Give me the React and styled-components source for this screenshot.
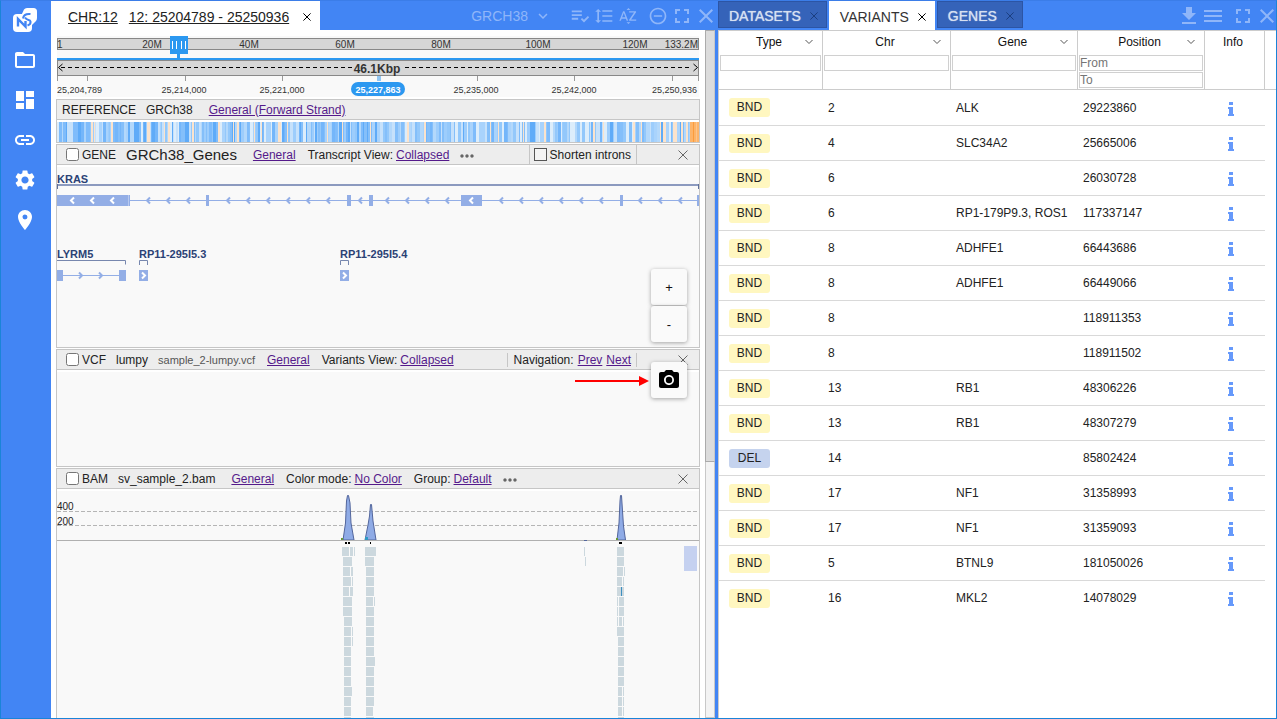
import React from 'react';
import styled, { createGlobalStyle, css } from 'styled-components';
import {
  MdFolderOpen, MdDashboard, MdInsertLink, MdSettings, MdPlace, MdPlaylistAddCheck,
  MdFormatLineSpacing, MdSortByAlpha, MdRemoveCircleOutline, MdFullscreen, MdClose,
  MdKeyboardArrowDown, MdDownload, MdMenu, MdMoreHoriz, MdPhotoCamera,
} from 'react-icons/md';

const GlobalStyle = createGlobalStyle`
  *, *::before, *::after { box-sizing: border-box; }
  body {
    margin: 0;
    background: #4285f4;
    color: #222;
    font-family: "Liberation Sans", Arial, sans-serif;
    font-size: 12px;
  }
  button, input { font: inherit; color: inherit; }
  button { border: 0; padding: 0; background: none; cursor: pointer; }
`;

const Frame = styled.div`
  display: grid;
  grid-template-columns: 50px minmax(0, 667fr) minmax(0, 558fr);
  min-height: 100vh;
  background: #4285f4;
  border: 1px solid #1a84d8;
  border-top-color: #3b7de8;
`;

const Sidebar = styled.nav`
  display: flex;
  flex-direction: column;
  align-items: center;
  gap: 18px;
  padding-top: 6px;
  color: #fff;
`;

const SideButton = styled.button`
  display: flex;
  align-items: center;
  justify-content: center;
  width: 26px;
  height: 22px;
  margin-right: 2px;
  svg { flex: none; }
`;

const Logo = styled.svg`
  width: 26px;
  height: 26px;
  margin: 0 2px -2px 0;
`;

const Panel = styled.section`
  display: flex;
  flex-direction: column;
  min-width: 0;
`;

const BrowserPanel = styled(Panel)`
  padding-right: 3px;
`;

const PanelHeader = styled.header`
  display: flex;
  align-items: flex-start;
  flex: none;
  height: 29px;
  gap: 2px;
`;

const Tab = styled.div`
  display: flex;
  align-items: center;
  gap: 9px;
  height: ${p => (p.$active ? 29 : 27)}px;
  padding: 2px 8px 0 10px;
  font-size: 14px;
  border: 1px solid ${p => (p.$active ? '#fff' : '#2c55a5')};
  background: ${p => (p.$active ? '#fff' : '#3563b9')};
  color: ${p => (p.$active ? '#333' : '#d7e0f1')};
  text-shadow: ${p => (p.$active ? 'none' : '0 0 1px #d7e0f1')};
  button { display: flex; color: ${p => (p.$active ? '#000' : '#1c3f80')}; }
`;

const LocationTab = styled(Tab)`
  gap: 11px;
  padding: 2px 8px 0 16px;
  a { color: #222; }
  button { padding-left: 3px; }
`;

const Toolbar = styled.div`
  display: flex;
  align-items: center;
  gap: 6px;
  height: 29px;
  margin-left: auto;
  color: #8fb6f9;
`;

const ToolGroup = styled.div`
  display: flex;
  gap: 6px;
  margin-right: 6px;
`;

const ToolButton = styled.button`
  display: flex;
  justify-content: center;
  align-items: center;
  width: 18px;
  height: 24px;
  svg { flex: none; }
`;

const GenomeButton = styled.button`
  display: flex;
  align-items: center;
  gap: 6px;
  margin-right: 13px;
  font-size: 14px;
`;

const BrowserBody = styled.div`
  position: relative;
  display: flex;
  flex: 1;
  background: #fff;
`;

const Tracks = styled.div`
  display: flex;
  flex-direction: column;
  flex: 1;
  gap: 1px;
  min-width: 0;
  padding: 6px 5px 0;
`;

const Chart = styled.svg`
  display: block;
  width: 100%;
  height: auto;
  background: #f9f9f9;
  font-family: "Liberation Sans", Arial, sans-serif;
`;

const RulerBox = styled.div`
  margin: 0 1px 1px;
`;

const Track = styled.section`
  display: flex;
  flex-direction: column;
  border: 1px solid #c6c6c6;
  background: #f9f9f9;
  ${p => p.$grow && css`flex: 1; border-bottom: 0;`}
`;

const TrackHeader = styled.div`
  display: flex;
  align-items: center;
  flex: none;
  height: 20px;
  padding: 0 11px 0 ${p => (p.$flush ? 5 : 9)}px;
  background: #ededed;
  border-bottom: 1px solid #c6c6c6;
  white-space: nowrap;
`;

const TrackContent = styled.div`
  border-top: 2px solid #fff;
  min-height: ${p => p.$min || 0}px;
`;

const TypeLabel = styled.label`
  display: flex;
  align-items: center;
  gap: 3px;
`;

const Check = styled.input.attrs({ type: 'checkbox' })`
  width: 13px;
  height: 13px;
  margin: 0;
  ${p => p.$square && css`
    appearance: none;
    border: 1px solid #555;
    background: #f4f4f4;
  `}
`;

const TrackName = styled.span`
  margin-left: 10px;
  font-size: ${p => (p.$large ? 15 : 12)}px;
`;

const FileName = styled.span`
  margin-left: 10px;
  font-size: 11px;
  color: #555;
`;

const Setting = styled.span`
  display: flex;
  gap: 3px;
  margin-left: ${p => (p.$first ? 16 : 12)}px;
`;

const Link = styled.a`
  color: #551a8b;
`;

const MoreButton = styled.button`
  display: flex;
  margin: 3px 0 0 8px;
  color: #666;
`;

const HeaderEnd = styled.div`
  display: flex;
  align-items: center;
  align-self: stretch;
  margin-left: auto;
`;

const EndBox = styled.div`
  display: flex;
  align-items: center;
  align-self: ${p => (p.$short ? 'center' : 'stretch')};
  gap: 4px;
  height: ${p => (p.$short ? '14px' : 'auto')};
  padding: 0 5px 0 ${p => (p.$short ? 6 : 4)}px;
  margin-right: 41px;
  border: solid #c6c6c6;
  border-width: 0 1px;
`;

const CloseButton = styled.button`
  display: flex;
  color: #666;
`;

const Scrollbar = styled.div`
  flex: none;
  width: 10px;
  background: #f3f3f3;
  border: 1px solid #c8c8c8;
  border-top: 0;
  &::before {
    content: "";
    display: block;
    height: 432px;
    margin: 0 -1px;
    background: #dcdcdc;
    border: 1px solid #ababab;
    border-right-color: #c8c8c8;
  }
`;

const FloatingControls = styled.div`
  position: absolute;
  top: 239px;
  right: 28px;
  display: flex;
  flex-direction: column;
  gap: 1px;
`;

const FloatButton = styled.button`
  display: flex;
  align-items: center;
  justify-content: center;
  width: 36px;
  height: 36px;
  border-radius: 3px;
  background: #fafafa;
  box-shadow: 0 1px 4px rgba(0, 0, 0, 0.35);
  font-size: 13px;
  color: #111;
  margin-top: ${p => (p.$apart ? 19 : 0)}px;
`;

const Pointer = styled.svg`
  position: absolute;
  top: 346px;
  right: 66px;
  width: 74px;
  height: 10px;
`;

const TableArea = styled.div`
  flex: 1;
  background: #fff;
  border: solid #ccc;
  border-width: 1px 0 0 1px;
`;

const Table = styled.table`
  width: 100%;
  table-layout: fixed;
  border-collapse: separate;
  border-spacing: 0;
`;

const HeadCell = styled.th`
  height: 59px;
  padding: 0 1px;
  vertical-align: top;
  font-weight: 400;
  color: #111;
  border: solid #ccc;
  border-width: 0 ${p => (p.$last ? 0 : 1)}px 1px 0;
`;

const HeadTitle = styled.div`
  display: grid;
  grid-template-columns: 1fr auto 1fr;
  align-items: center;
  height: 22px;
  margin-bottom: 2px;
  padding: 0 8px 0 5px;
  svg { grid-column: 3; justify-self: end; color: #555; }
  span { grid-column: 2; }
`;

const Filter = styled.input`
  display: block;
  width: 100%;
  height: 16px;
  margin-bottom: 1px;
  padding: 0;
  border: 1px solid #d0d0d0;
  background: #fff;
  &::placeholder { color: #757575; }
`;

const Row = styled.tr`
  & + & td:not(:last-child) { border-top: 1px solid #d9d9d9; }
`;

const Cell = styled.td`
  height: 35px;
  padding: 0 0 0 ${p => (p.$type ? 10 : 5)}px;
  white-space: nowrap;
`;

const Badge = styled.span`
  display: inline-block;
  width: 41px;
  line-height: 19px;
  border-radius: 3px;
  text-align: center;
  background: ${p => (p.$kind === 'DEL' ? '#c5d3ee' : '#fff7c0')};
`;

const InfoButton = styled.button`
  display: flex;
  margin: 2px auto 0 18px;
  color: #6699fb;
`;

const ThinX = ({ size = 8 }) => (
  <svg width={size} height={size} viewBox="0 0 10 10" stroke="currentColor" strokeWidth={10 / size}>
    <path d="M0.5 0.5 9.5 9.5M9.5 0.5 0.5 9.5" fill="none" />
  </svg>
);

const Chevron = () => (
  <svg width="8" height="6" viewBox="0 0 8 6" fill="none" stroke="currentColor"><path d="M0.5 1 4 4.5 7.5 1" /></svg>
);

const InfoIcon = () => (
  <svg width="6" height="14" viewBox="0 0 6 14" fill="currentColor">
    <path d="M1 0h4v3H1zM0 5h5v7h1v2H0v-2h1V7H0z" />
  </svg>
);

function Ruler() {
  const marks = [['20M', 95], ['40M', 192], ['60M', 288], ['80M', 384], ['100M', 481], ['120M', 578]];
  const ticks = [0.5, 30.5, 128.5, 225.5, 420.5, 517.5, 615.5, 641.5];
  const positions = [['25,214,000', 127], ['25,221,000', 225], ['25,235,000', 419], ['25,242,000', 517]];
  return (
    <RulerBox>
      <Chart viewBox="0 0 642 61" fontSize="10" fill="#333">
        <rect x="0.5" y="2.5" width="641" height="11" fill="#d6d6d6" stroke="#888" />
        <text x="0" y="12">1</text>
        {marks.map(([t, x]) => <text key={t} x={x} y="12" textAnchor="middle">{t}</text>)}
        <text x="641" y="12" textAnchor="end">133.2M</text>
        <rect x="0.5" y="24.5" width="641" height="15" fill="#d6d6d6" stroke="#888" />
        <rect x="0" y="22" width="642" height="2" fill="#2c98f0" />
        <rect x="113" y="0" width="18" height="18" fill="#2c98f0" />
        <rect x="120" y="18" width="3" height="4" fill="#2c98f0" />
        <path d="M115.5 5v8M119.5 5v8M124.5 5v8M128.5 5v8" stroke="#fff" />
        <path d="M4 31.5H296M348 31.5H634" stroke="#000" strokeDasharray="4 3" />
        <path d="M5.5 28 1.5 31.5 5.5 35M636.5 28 640.5 31.5 636.5 35" fill="none" stroke="#000" />
        <text x="320" y="37" fontSize="12" fontWeight="bold" textAnchor="middle">46.1Kbp</text>
        {ticks.map(x => <path key={x} d={`M${x} 40v5`} stroke="#999" />)}
        <rect x="320" y="40" width="4" height="5" fill="#92c6f3" />
        <text x="0" y="57" fontSize="9">25,204,789</text>
        {positions.map(([t, x]) => <text key={t} x={x} y="57" fontSize="9" textAnchor="middle">{t}</text>)}
        <text x="640" y="57" fontSize="9" textAnchor="end">25,250,936</text>
        <rect x="294" y="46" width="54" height="14" rx="7" fill="#2c98f0" />
        <text x="321" y="57" fontSize="9" fontWeight="bold" fill="#fff" textAnchor="middle">25,227,863</text>
      </Chart>
    </RulerBox>
  );
}

// Pale runs along the reference strip: [start, end].
const WARM_RUNS = [
  [34, 36], [37, 38], [54, 56], [90, 93], [107, 108], [111, 113], [135, 137], [161, 163], [176, 177],
  [180, 182], [197, 198], [204, 205], [221, 224], [230, 231], [270, 271], [285, 286], [313, 314],
  [350, 352], [367, 369], [433, 434], [441, 442], [466, 467], [487, 489], [536, 538], [546, 547],
  [576, 578], [584, 585], [603, 604], [606, 609], [616, 620], [624, 626], [629, 631],
];
const BLUES = ['#7fbcfb', '#93c8fb', '#a9d3fc', '#74b6fa', '#c6e1fb', '#9dcdfc', '#84bffa', '#b3d8fb', '#5fabf8', '#dcedfb'];

function buildStripes() {
  const stripes = [];
  let seed = 7;
  for (let x = 0; x < 642;) {
    seed = (seed * 1103515245 + 12345) % 2147483648;
    const w = 1 + (Math.floor(seed / 65536) % 3);
    stripes.push({ x, w, fill: BLUES[Math.floor(seed / 4096) % BLUES.length] });
    x += w;
  }
  WARM_RUNS.forEach(([a, b]) => stripes.push({ x: a, w: b - a, fill: '#fbe3cc' }));
  [[633, 642, '#fdb469'], [636, 637, '#fb9c3c'], [639, 640, '#fdc48a']].forEach(([a, b, fill]) =>
    stripes.push({ x: a, w: b - a, fill }));
  return stripes;
}
const STRIPES = buildStripes();

const arrowPath = (x, y, dir) => `M${x - 2 * dir} ${y - 3} L${x + dir} ${y} L${x - 2 * dir} ${y + 3}`;

function GeneChart() {
  const exons = [[0, 73], [149, 3], [290, 4], [312, 4], [404, 21], [563, 3], [640, 2]];
  const arrows = [91, 111, 131, 171, 191, 211, 231, 251, 271, 303, 330, 350, 370, 390, 444, 464, 484, 504, 524, 544, 583, 603, 623];
  return (
    <Chart viewBox="0 0 642 180" fontSize="11" fontWeight="bold" fill="#2b4275">
      <text x="0" y="16">KRAS</text>
      <path d="M0 18h642" stroke="#8c9abf" strokeWidth="2" />
      <path d="M0.5 17v5M641.5 17v5" stroke="#5f7099" />
      <path d="M73 33.5h569" stroke="#93aee6" />
      {arrows.map(x => <path key={x} d={arrowPath(x, 33.5, -1)} fill="none" stroke="#93aee6" strokeWidth="2" />)}
      {exons.map(([x, w]) => <rect key={x} x={x} y="28" width={w} height="11" fill="#93aee6" />)}
      <path d="M71.5 28v11" stroke="#b7c9ef" />
      {[15, 35, 55, 414].map(x => <path key={x} d={arrowPath(x, 33.5, -1)} fill="none" stroke="#fff" strokeWidth="2" />)}

      <text x="0" y="91">LYRM5</text>
      <path d="M0 93.5h68.5v4" fill="none" stroke="#7787ae" />
      <path d="M6 108.5h56" stroke="#93aee6" />
      <rect x="0" y="103" width="6" height="11" fill="#93aee6" />
      <rect x="62" y="103" width="7" height="11" fill="#93aee6" />
      {[24, 44].map(x => <path key={x} d={arrowPath(x, 108.5, 1)} fill="none" stroke="#93aee6" strokeWidth="2" />)}

      {[['RP11-295I5.3', 82], ['RP11-295I5.4', 283]].map(([name, x]) => (
        <g key={name}>
          <text x={x} y="91">{name}</text>
          <path d={`M${x + 0.5} 98v-4.5h8v4.5`} fill="none" stroke="#7787ae" />
          <rect x={x} y="103" width="9" height="11" fill="#93aee6" />
          <path d={arrowPath(x + 5, 108.5, 1)} fill="none" stroke="#fff" strokeWidth="2" />
        </g>
      ))}
    </Chart>
  );
}

// Read piles: one entry per row, each holding [x, width] blocks.
const PILE_A = [
  [[285, 7], [293, 3], [297, 1]], [[286, 9]], [[286, 7], [294, 2]], [[286, 8], [295, 1]], [[286, 6], [293, 3]],
  [[286, 9]], [[286, 9]], [[287, 8]], [[287, 7], [295, 1]], [[287, 7], [295, 1]], [[287, 7]], [[287, 7]],
  [[287, 7]], [[287, 7]], [[287, 8]], [[287, 7]], [[287, 7]], [[287, 7]],
];
const PILE_B = [
  [[308, 11]], [[308, 9]], [[309, 8]], [[309, 8]], [[309, 8]], [[309, 7], [317, 1]], [[309, 8]], [[309, 8]],
  [[309, 8]], [[309, 8]], [[309, 8]], [[309, 9]], [[309, 8]], [[309, 8]], [[309, 8]], [[309, 8]], [[309, 7]], [[309, 8]],
];
const PILE_C = [
  [[560, 7]], [[560, 7]], [[560, 6], [567, 1]], [[560, 5], [566, 1]], [[560, 7]], [[560, 1], [562, 5]],
  [[560, 1], [562, 5]], [[560, 1], [562, 3], [566, 1]], [[560, 7]], [[561, 6]], [[561, 6]], [[561, 6]],
  [[561, 6]], [[561, 6]], [[561, 4], [566, 1]], [[561, 4], [566, 1]], [[561, 4], [566, 1]], [[561, 6]],
];
const PILE_D = [[[527, 1]], [[528, 1]]];

function BamChart() {
  return (
    <Chart viewBox="0 0 642 227" fontSize="10" fill="#222">
      <path d="M0 20.5h640M0 34.5h640" stroke="#b5b5b5" strokeDasharray="4 2" />
      <text x="0" y="19">400</text>
      <text x="0" y="34">200</text>
      <g fill="#8fabe6" stroke="#53669c">
        <path d="M286 49 288.5 32 289.5 10 290.5 4.5h1L293 12l1 20 3 17z" />
        <path d="M308 49 311 34 312.5 25 313.5 13.5h1L316 30l3 19z" />
        <path d="M560 49 562 32 563 10 563.5 4.5h1L565.5 20l1 15 2 14z" />
      </g>
      <path d="M308 46h3v3h-3z" fill="#2f9ac4" />
      <path d="M284 47h2v2h-2zM559 47h2v2h-2z" fill="#6a9b35" />
      <path d="M0 49.5h642" stroke="#b0b0b0" />
      <path d="M527 49.5h3" stroke="#53669c" />
      <path d="M288 51h2v2h-2zM291 51h2v2h-2zM313 51h1v2h-1zM562 51h3v2h-3z" fill="#000" />
      <g fill="#ccd8de">
        {[PILE_A, PILE_B, PILE_C, PILE_D].map((pile, p) => pile.map((blocks, r) => blocks.map(([x, w]) => (
          <rect key={`${p}-${r}-${x}`} x={x} y={56 + r * 10} width={w} height="9" />
        ))))}
      </g>
      <rect x="564" y="96" width="1" height="9" fill="#3d8fc0" />
      <rect x="627" y="55" width="13" height="25" fill="#c5d1f0" />
    </Chart>
  );
}

const TrackClose = () => <CloseButton aria-label="Close track"><ThinX size={10} /></CloseButton>;

const More = () => <MoreButton aria-label="More"><MdMoreHoriz size={20} /></MoreButton>;

const LinkedSetting = ({ label, value }) => (
  <Setting><span>{label}</span><Link href="#">{value}</Link></Setting>
);

const VARIANTS = [
  ['BND', '2', 'ALK', '29223860'], ['BND', '4', 'SLC34A2', '25665006'], ['BND', '6', '', '26030728'],
  ['BND', '6', 'RP1-179P9.3, ROS1', '117337147'], ['BND', '8', 'ADHFE1', '66443686'],
  ['BND', '8', 'ADHFE1', '66449066'], ['BND', '8', '', '118911353'], ['BND', '8', '', '118911502'],
  ['BND', '13', 'RB1', '48306226'], ['BND', '13', 'RB1', '48307279'], ['DEL', '14', '', '85802424'],
  ['BND', '17', 'NF1', '31358993'], ['BND', '17', 'NF1', '31359093'], ['BND', '5', 'BTNL9', '181050026'],
  ['BND', '16', 'MKL2', '14078029'],
];
const COLUMN_WIDTHS = [104, 128, 127, 127, 60, 11];

function VariantsTable() {
  return (
    <Table>
      <colgroup>{COLUMN_WIDTHS.map((w, i) => <col key={i} width={w} />)}</colgroup>
      <thead>
        <tr>
          {['Type', 'Chr', 'Gene'].map(name => (
            <HeadCell key={name}>
              <HeadTitle><span>{name}</span><Chevron /></HeadTitle>
              <Filter aria-label={`${name} filter`} />
            </HeadCell>
          ))}
          <HeadCell>
            <HeadTitle><span>Position</span><Chevron /></HeadTitle>
            <Filter placeholder="From" aria-label="Position from" />
            <Filter placeholder="To" aria-label="Position to" />
          </HeadCell>
          <HeadCell><HeadTitle><span>Info</span></HeadTitle></HeadCell>
          <HeadCell $last />
        </tr>
      </thead>
      <tbody>
        {VARIANTS.map(([type, chr, gene, pos]) => (
          <Row key={pos}>
            <Cell $type><Badge $kind={type}>{type}</Badge></Cell>
            <Cell>{chr}</Cell>
            <Cell>{gene}</Cell>
            <Cell>{pos}</Cell>
            <Cell><InfoButton aria-label="Variant info"><InfoIcon /></InfoButton></Cell>
            <Cell />
          </Row>
        ))}
      </tbody>
    </Table>
  );
}

export default function App() {
  return (
    <>
      <GlobalStyle />
      <Frame>
        <Sidebar>
          <Logo viewBox="0 0 26 26">
            <rect x="1" y="7" width="19" height="18" rx="4" fill="#fff" />
            <path d="M12 2.5Q13 1 15 1h6.500Q25 1 25 4.500V11q0 2-1.500 3.500L18 20 9 9z" fill="#fff" />
            <path d="M6 19.500V12L13.500 19.500V14" fill="none" stroke="#4285f4" strokeWidth="2.400" />
            <path d="M11 11.500C11.500 8 14 6.500 18.500 7M13 10.500C15 14 18 12 18.500 14.500S17 18 15.500 18.500" fill="none" stroke="#4285f4" strokeWidth="2" />
          </Logo>
          <SideButton aria-label="Browse"><MdFolderOpen size={24} /></SideButton>
          <SideButton aria-label="Panels"><MdDashboard size={24} /></SideButton>
          <SideButton aria-label="Share link"><MdInsertLink size={24} /></SideButton>
          <SideButton aria-label="Settings"><MdSettings size={24} /></SideButton>
          <SideButton aria-label="Location"><MdPlace size={24} /></SideButton>
        </Sidebar>

        <BrowserPanel>
          <PanelHeader>
            <LocationTab $active>
              <a href="#">CHR:12</a>
              <a href="#">12: 25204789 - 25250936</a>
              <button aria-label="Close location"><ThinX /></button>
            </LocationTab>
            <Toolbar>
              <GenomeButton>GRCH38 <MdKeyboardArrowDown size={18} /></GenomeButton>
              <ToolGroup>
                <ToolButton aria-label="Tracks"><MdPlaylistAddCheck size={22} /></ToolButton>
                <ToolButton aria-label="Line spacing"><MdFormatLineSpacing size={20} /></ToolButton>
                <ToolButton aria-label="Sort"><MdSortByAlpha size={20} /></ToolButton>
              </ToolGroup>
              <ToolButton aria-label="Collapse"><MdRemoveCircleOutline size={20} /></ToolButton>
              <ToolButton aria-label="Full screen"><MdFullscreen size={24} /></ToolButton>
              <ToolButton aria-label="Close browser"><MdClose size={24} /></ToolButton>
            </Toolbar>
          </PanelHeader>

          <BrowserBody>
            <Tracks>
              <Ruler />
              <Track>
                <TrackHeader $flush>
                  <span>REFERENCE</span>
                  <TrackName>GRCh38</TrackName>
                  <Setting $first><Link href="#">General (Forward Strand)</Link></Setting>
                </TrackHeader>
                <TrackContent>
                  <Chart viewBox="0 0 642 20" shapeRendering="crispEdges">
                    {STRIPES.map((s, i) => <rect key={i} x={s.x} y="0" width={s.w} height="20" fill={s.fill} />)}
                  </Chart>
                </TrackContent>
              </Track>
              <Track>
                <TrackHeader>
                  <TypeLabel><Check />GENE</TypeLabel>
                  <TrackName $large>GRCh38_Genes</TrackName>
                  <Setting $first><Link href="#">General</Link></Setting>
                  <LinkedSetting label="Transcript View:" value="Collapsed" />
                  <More />
                  <HeaderEnd>
                    <EndBox><TypeLabel><Check $square />Shorten introns</TypeLabel></EndBox>
                    <TrackClose />
                  </HeaderEnd>
                </TrackHeader>
                <TrackContent><GeneChart /></TrackContent>
              </Track>
              <Track>
                <TrackHeader>
                  <TypeLabel><Check />VCF</TypeLabel>
                  <TrackName>lumpy</TrackName>
                  <FileName>sample_2-lumpy.vcf</FileName>
                  <Setting><Link href="#">General</Link></Setting>
                  <LinkedSetting label="Variants View:" value="Collapsed" />
                  <HeaderEnd>
                    <EndBox $short>
                      <span>Navigation:</span><Link href="#">Prev</Link><Link href="#">Next</Link>
                    </EndBox>
                    <TrackClose />
                  </HeaderEnd>
                </TrackHeader>
                <TrackContent $min={96} />
              </Track>
              <Track $grow>
                <TrackHeader>
                  <TypeLabel><Check />BAM</TypeLabel>
                  <TrackName>sv_sample_2.bam</TrackName>
                  <Setting $first><Link href="#">General</Link></Setting>
                  <LinkedSetting label="Color mode:" value="No Color" />
                  <LinkedSetting label="Group:" value="Default" />
                  <More />
                  <HeaderEnd><TrackClose /></HeaderEnd>
                </TrackHeader>
                <TrackContent><BamChart /></TrackContent>
              </Track>
            </Tracks>
            <Scrollbar />
            <FloatingControls>
              <FloatButton aria-label="Zoom in">+</FloatButton>
              <FloatButton aria-label="Zoom out">-</FloatButton>
              <FloatButton $apart aria-label="Take snapshot"><MdPhotoCamera size={24} color="#000" /></FloatButton>
            </FloatingControls>
            <Pointer viewBox="0 0 74 10">
              <path d="M0 5h66" stroke="#f00" strokeWidth="2" />
              <path d="M64 0 74 5 64 10z" fill="#f00" />
            </Pointer>
          </BrowserBody>
        </BrowserPanel>

        <Panel>
          <PanelHeader>
            <Tab>DATASETS <button aria-label="Close datasets"><ThinX /></button></Tab>
            <Tab $active>VARIANTS <button aria-label="Close variants"><ThinX /></button></Tab>
            <Tab>GENES <button aria-label="Close genes"><ThinX /></button></Tab>
            <Toolbar>
              <ToolGroup>
                <ToolButton aria-label="Download"><MdDownload size={24} /></ToolButton>
                <ToolButton aria-label="Menu"><MdMenu size={24} /></ToolButton>
              </ToolGroup>
              <ToolButton aria-label="Full screen"><MdFullscreen size={24} /></ToolButton>
              <ToolButton aria-label="Close panel"><MdClose size={24} /></ToolButton>
            </Toolbar>
          </PanelHeader>
          <TableArea><VariantsTable /></TableArea>
        </Panel>
      </Frame>
    </>
  );
}
